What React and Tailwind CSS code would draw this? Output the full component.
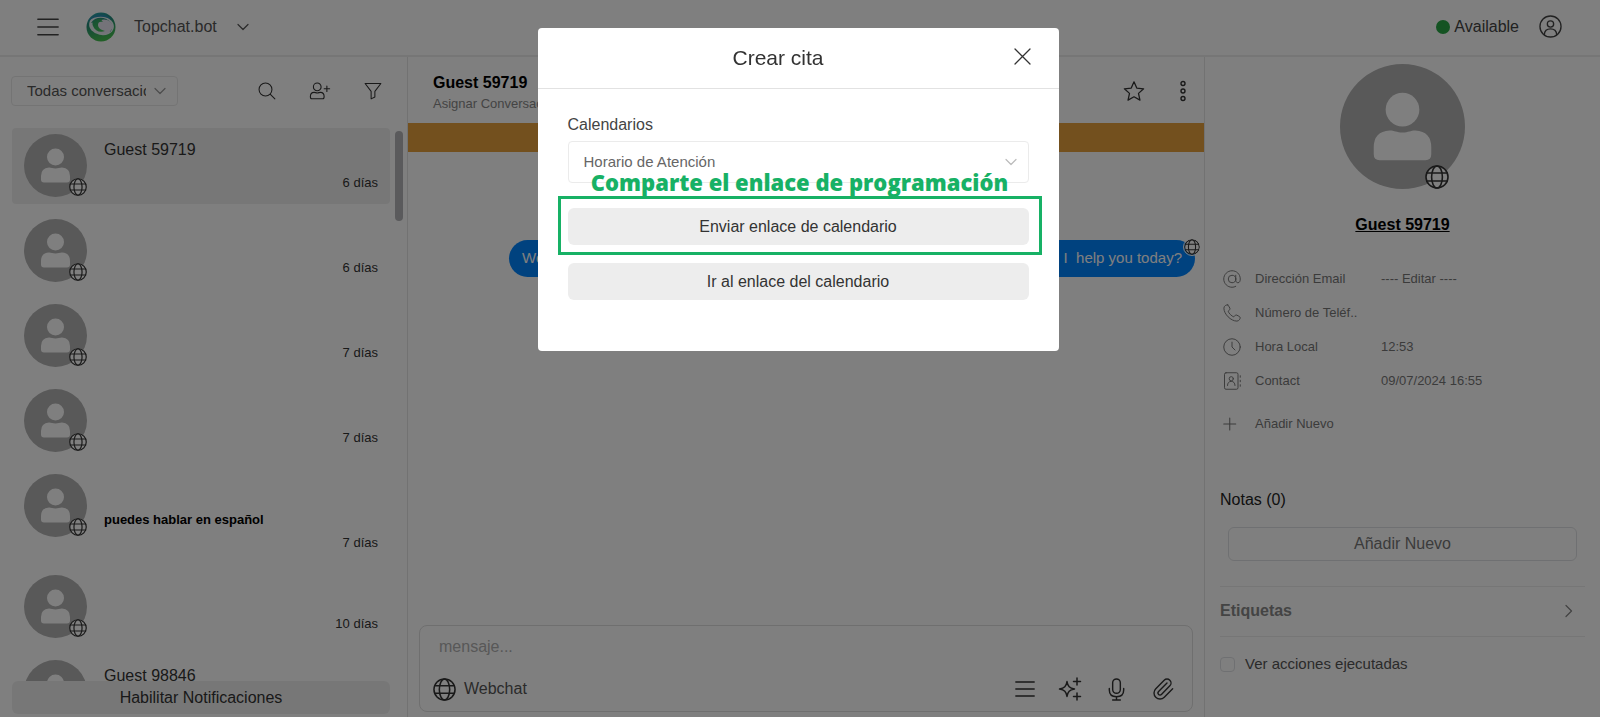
import React from 'react';

const conversations = [
  { id: 1, name: 'Guest 59719', message: '', time: '6 días', active: true },
  { id: 2, name: '', message: '', time: '6 días' },
  { id: 3, name: '', message: '', time: '7 días' },
  { id: 4, name: '', message: '', time: '7 días' },
  { id: 5, name: '', message: 'puedes hablar en español', time: '7 días' },
  { id: 6, name: '', message: '', time: '10 días' },
  { id: 7, name: 'Guest 98846', message: '', time: '' },
];

// Shared wrapper for the thin line icons
const Icon = ({ className, viewBox = '0 0 24 24', width = 1.4, children }) => (
  <svg
    className={className}
    viewBox={viewBox}
    fill="none"
    stroke="currentColor"
    strokeWidth={width}
    strokeLinecap="round"
    strokeLinejoin="round"
    aria-hidden="true"
  >
    {children}
  </svg>
);

const ChevronDown = ({ className }) => (
  <Icon className={className} viewBox="0 0 12 12" width={1.2}>
    <path d="M1 3.5 6 8.5l5-5" />
  </Icon>
);

const Globe = ({ className }) => (
  <Icon className={className} width={1.6}>
    <circle cx="12" cy="12" r="11" fill="#fff" />
    <ellipse cx="12" cy="12" rx="5.4" ry="11" />
    <path d="M1.8 8h20.4M1.8 16h20.4" />
  </Icon>
);

const Menu = ({ className }) => (
  <Icon className={className} width={1.8}>
    <path d="M1 3.5h22M1 12h22M1 20.5h22" />
  </Icon>
);

const Avatar = ({ className }) => (
  <svg className={className} viewBox="0 0 126 126" aria-hidden="true">
    <circle cx="63" cy="63" r="63" fill="#b2b2b2" />
    <circle cx="63" cy="46" r="17" fill="#fff" />
    <path
      d="M40 97q-6 0-6-6v-7q0-16 16-17c5 0 7 2 13 2s8-2 13-2q16 1 16 17v7q0 6-6 6z"
      fill="#fff"
    />
  </svg>
);

const Logo = ({ className }) => (
  <svg className={className} viewBox="0 0 30 30" aria-hidden="true">
    <defs>
      <linearGradient id="ring" x1="0" y1="0" x2="0.3" y2="1">
        <stop offset="0" stopColor="#2aa7b5" />
        <stop offset="0.4" stopColor="#238a78" />
        <stop offset="1" stopColor="#45bf50" />
      </linearGradient>
      <linearGradient id="swirl" x1="0" y1="0" x2="0.6" y2="1">
        <stop offset="0" stopColor="#2c9c6a" />
        <stop offset="1" stopColor="#45c25a" />
      </linearGradient>
    </defs>
    <circle cx="15" cy="15" r="14.5" fill="url(#ring)" />
    <ellipse cx="15.500" cy="13.500" rx="12.500" ry="9.500" fill="#e6eef0" transform="rotate(12 15.500 13.500)" />
    <path d="M5 11C9 4 20 4 25 11c2 4 1 7-1 9C22 11 14 8 5 11z" fill="#2a8f7c" />
    <ellipse cx="18" cy="14.500" rx="8.500" ry="7" fill="#e9e6f2" />
    <path d="M16 7C9 6 5 10 7 14c2 5 7 7 12 5-4-1-7-3-7-6 0-3 2-4 5-3-1-1-2-2-1-3z" fill="url(#swirl)" />
    <path d="M2 9C7 1 20 0 26 8 18 3 9 4 2 9z" fill="#2b8fae" />
  </svg>
);

const TopBar = () => (
  <header className="flex h-[57px] shrink-0 items-center justify-between border-b-2 border-[#ececec] pb-[2px] pl-[37px] pr-[38px]">
    <div className="flex items-center">
      <button type="button" aria-label="Menú" className="text-[#444]">
        <Menu className="h-[22px] w-[22px]" />
      </button>
      <Logo className="ml-[27px] h-[30px] w-[30px]" />
      <button type="button" className="ml-[18px] flex items-center text-base text-[#555]">
        Topchat.bot
        <ChevronDown className="ml-5 h-3 w-3" />
      </button>
    </div>
    <div className="flex items-center">
      <span className="h-3.5 w-3.5 rounded-full bg-[#28a745]" />
      <span className="ml-1 text-base text-[#444]">Available</span>
      <button type="button" aria-label="Perfil" className="ml-5 text-[#444]">
        <Icon className="h-[23px] w-[23px]">
          <circle cx="12" cy="12" r="11" />
          <circle cx="12" cy="9.4" r="3.3" />
          <path d="M5.5 20.5c.3-4 2.7-6 6.5-6s6.2 2 6.5 6" />
        </Icon>
      </button>
    </div>
  </header>
);

const ConversationItem = ({ name, message, time, active }) => (
  <li className={`flex min-h-[76px] shrink-0 px-3 pb-[7px] ${active ? 'rounded bg-[#efefef]' : ''}`}>
    <div className="relative mt-[6px] h-[63px] w-[63px] shrink-0">
      <Avatar className="h-[63px] w-[63px]" />
      <Globe className="absolute bottom-px right-0 h-[18px] w-[18px] text-[#333]" />
    </div>
    <div className="ml-[17px] flex-1 pt-[10px]">
      <p className="h-6 text-base leading-6 text-[#333]">{name}</p>
      {message && <p className="mt-[9px] text-[13px] font-bold leading-[18px] text-black">{message}</p>}
      {time && (
        <p className={`text-right text-[13px] leading-5 text-[#333] ${message ? 'mt-1' : 'mt-[11px]'}`}>{time}</p>
      )}
    </div>
  </li>
);

const ConversationList = () => (
  <aside className="flex w-[408px] shrink-0 flex-col border-r border-[#e4e4e4]">
    <div className="flex items-center pl-[11px] pr-3 pt-[19px]">
      <div className="relative">
        <select
          aria-label="Filtro de conversaciones"
          className="h-[30px] w-[167px] appearance-none rounded border border-[#e9e9e9] bg-white pl-[15px] pr-[31px] text-[15px] text-[#555]"
        >
          <option>Todas conversaciones</option>
        </select>
        <ChevronDown className="pointer-events-none absolute right-3 top-[9px] h-3 w-3 text-[#999]" />
      </div>
      <div className="flex flex-1 items-center justify-end gap-[33px] pr-[13px] text-[#333]">
        <button type="button" aria-label="Buscar">
          <Icon className="h-[18px] w-[18px]">
            <circle cx="10" cy="10" r="8.6" />
            <path d="m16.5 16.5 6 6" />
          </Icon>
        </button>
        <button type="button" aria-label="Asignar contacto">
          <Icon className="h-[22px] w-[22px]" width={1.2}>
            <circle cx="9" cy="7.5" r="4.2" />
            <path d="M1.5 18c0-3 1.5-4.5 4-4.5 1.5 0 2 .6 3.5.6s2-.6 3.5-.6c2.5 0 4 1.5 4 4.5 0 2-.5 2.5-1.5 2.5H3c-1 0-1.5-.5-1.5-2.5z" />
            <path d="M16.5 9.5h6M19.5 6.5v6" />
          </Icon>
        </button>
        <button type="button" aria-label="Filtrar">
          <Icon className="h-[18px] w-[18px]">
            <path d="M1.5 2h21l-8 10.5V20l-5 2.5v-10z" />
          </Icon>
        </button>
      </div>
    </div>
    <div className="mt-[22px] flex min-h-0 flex-1">
      <ul className="ml-3 flex w-[378px] flex-col gap-[9px] overflow-hidden">
        {conversations.map((item) => (
          <ConversationItem key={item.id} {...item} />
        ))}
      </ul>
      <div className="ml-[5px] mt-[3px] h-[90px] w-2 rounded-full bg-[#b5b5b8]" />
    </div>
    <button
      type="button"
      className="mb-[3px] ml-3 mr-[17px] h-[33px] shrink-0 rounded-md bg-[#efefef] text-base text-[#333]"
    >
      Habilitar Notificaciones
    </button>
  </aside>
);

const Composer = () => (
  <div className="mx-[11px] mb-[5px] flex h-[87px] flex-col rounded-lg border border-[#dedede] px-[13px] pb-[10px] pt-[9px]">
    <input
      type="text"
      aria-label="Mensaje"
      placeholder="mensaje..."
      className="h-6 px-[6px] text-base outline-none placeholder:text-[#b0b0b0]"
    />
    <div className="mt-auto flex items-center justify-between">
      <button type="button" className="flex items-center gap-2 text-base text-[#555]">
        <Globe className="h-[23px] w-[23px] text-[#333]" />
        Webchat
      </button>
      <div className="flex items-center gap-[23px] pr-1 text-[#333]">
        <button type="button" aria-label="Plantillas">
          <Menu className="h-5 w-5" />
        </button>
        <button type="button" aria-label="Inteligencia artificial">
          <Icon className="h-6 w-6" width={1.5}>
            <path d="M9 4.5c.8 5 2.5 6.7 7.5 7.5-5 .8-6.7 2.5-7.5 7.5-.8-5-2.5-6.7-7.5-7.5 5-.8 6.7-2.5 7.5-7.5z" />
            <path d="M15.5 4.5h7M19 1v7M15.5 19.5h7M19 16v7" />
          </Icon>
        </button>
        <button type="button" aria-label="Grabar audio">
          <Icon className="h-[23px] w-[23px]" width={1.5}>
            <rect x="8" y="1" width="8" height="15" rx="4" />
            <path d="M4.5 11v1.5c0 4.5 3 7 7.5 7s7.5-2.5 7.5-7V11M12 19.5V23M8 23h8" />
          </Icon>
        </button>
        <button type="button" aria-label="Adjuntar archivo">
          <Icon className="h-6 w-6" width={1.4}>
            <path d="m16 6-8.414 8.586a2 2 0 0 0 2.829 2.829l8.414-8.586a4 4 0 1 0-5.657-5.657l-8.379 8.551a6 6 0 1 0 8.485 8.485l8.379-8.551" />
          </Icon>
        </button>
      </div>
    </div>
  </div>
);

const ChatPanel = () => (
  <main className="flex min-w-0 flex-1 flex-col">
    <div className="flex h-[66px] shrink-0 items-center justify-between pl-[25px] pr-[13px] pt-[2px]">
      <div className="pt-[6px]">
        <h2 className="text-base font-bold leading-5 text-black">Guest 59719</h2>
        <p className="text-[13px] leading-[22px] text-[#888]">Asignar Conversación</p>
      </div>
      <div className="flex items-center gap-[30px] text-[#333]">
        <button type="button" aria-label="Destacar">
          <Icon className="h-[22px] w-[22px]">
            <path d="m12 2 3 6.8 7.5.8-5.600 5 1.600 7.4-6.500-3.700L5.500 22l1.600-7.400-5.600-5L9 8.800z" />
          </Icon>
        </button>
        <button type="button" aria-label="Más opciones">
          <Icon className="h-[22px] w-4" viewBox="0 0 16 22">
            <circle cx="8" cy="3.5" r="2" />
            <circle cx="8" cy="11" r="2" />
            <circle cx="8" cy="18.5" r="2" />
          </Icon>
        </button>
      </div>
    </div>
    <div className="h-[29px] shrink-0 bg-[#e6a03c]" />
    <div className="flex-1 pl-[101px] pr-[9px] pt-[88px]">
      <div className="relative flex h-[37px] items-center justify-between rounded-full bg-[#0084ff] px-[13px] text-[15px] text-white">
        <span>Welcome to Topchat.bot!</span>
        <span className="whitespace-pre">How can I  help you today?</span>
        <Globe className="absolute -right-[5px] -top-px h-4 w-4 rounded-full text-[#333] outline outline-1 outline-white" />
      </div>
    </div>
    <Composer />
  </main>
);

const DetailRow = ({ icon, label, value }) => (
  <div className="flex h-[34px] items-center text-[13px] text-[#777]">
    <Icon className="h-[18px] w-[18px] shrink-0" width={1.3}>
      {icon}
    </Icon>
    <dt className="ml-[14px] w-[126px] shrink-0">{label}</dt>
    <dd>{value}</dd>
  </div>
);

const DetailsPanel = () => (
  <aside className="flex w-[396px] shrink-0 flex-col border-l border-[#e4e4e4] px-[15px] pt-[7px]">
    <div className="relative self-center">
      <Avatar className="h-[125px] w-[125px]" />
      <Globe className="absolute bottom-0 right-4 h-6 w-6 text-[#333]" />
    </div>
    <a href="#perfil" className="mt-6 self-center text-base font-bold leading-6 text-black underline">
      Guest 59719
    </a>
    <dl className="mt-[25px] pl-[3px]">
      <DetailRow
        label="Dirección Email"
        value="---- Editar ----"
        icon={
          <>
            <circle cx="12" cy="12" r="5" />
            <path d="M17 7v6.5c0 2.5 1.5 3.5 3 3.5 2.2 0 3-2.5 3-5C23 5.5 18 1 12 1S1 6 1 12s5 11 11 11c2 0 3.5-.4 5-1.2" />
          </>
        }
      />
      <DetailRow
        label="Número de Teléf.."
        value=""
        icon={
          <path d="M6.5 1.200c-2-.7-5.300 1.500-5.300 4.300 0 8 9.300 17.300 17.300 17.300 2.800 0 5-3.300 4.300-5.300-.2-.6-4.800-3-5.500-3-1 0-2 2.500-3 2.500-2 0-7.300-5.300-7.300-7.300 0-1 2.500-2 2.500-3 0-.7-2.400-5.300-3-5.500z" />
        }
      />
      <DetailRow
        label="Hora Local"
        value="12:53"
        icon={
          <>
            <circle cx="12" cy="12" r="11" />
            <path d="M12 5.5V12l4 4" />
          </>
        }
      />
      <DetailRow
        label="Contact"
        value="09/07/2024 16:55"
        icon={
          <>
            <rect x="2" y="1" width="18" height="22" rx="2" />
            <circle cx="11" cy="9" r="2.8" />
            <path d="M6 18c0-3.5 2-5.5 5-5.5s5 2 5 5.5M23 5v2M23 11v2M23 17v2" />
          </>
        }
      />
    </dl>
    <button type="button" className="ml-[3px] mt-[9px] flex h-[34px] items-center text-[13px] text-[#777]">
      <Icon className="h-[18px] w-[18px]">
        <path d="M1 12h16M9 4v16" />
      </Icon>
      <span className="ml-[14px]">Añadir Nuevo</span>
    </button>
    <h3 className="mt-[47px] text-base leading-6 text-[#222]">Notas (0)</h3>
    <button
      type="button"
      className="mx-2 mt-[15px] h-[34px] shrink-0 rounded-md border border-[#dfe1e4] text-base text-[#777]"
    >
      Añadir Nuevo
    </button>
    <button
      type="button"
      className="mt-[25px] flex h-[51px] shrink-0 items-center justify-between border-y border-[#ececec] pb-[2px] pr-[10px] text-base font-bold text-[#888]"
    >
      Etiquetas
      <Icon className="h-3.5 w-3.5" viewBox="0 0 14 14" width={1.3}>
        <path d="m5 1.5 5.5 5.5L5 12.5" />
      </Icon>
    </button>
    <label className="mt-[15px] flex items-center gap-[10px] text-[15px] leading-6 text-[#555]">
      <input type="checkbox" className="h-[15px] w-[15px] appearance-none rounded-sm border border-[#dfe1e4]" />
      Ver acciones ejecutadas
    </label>
  </aside>
);

const AppointmentModal = () => (
  <div className="fixed inset-0 flex items-start justify-center bg-black/50 pr-1 pt-7">
    <div role="dialog" aria-modal="true" aria-labelledby="modal-title" className="w-[521px] rounded bg-white pb-[51px]">
      <div className="relative flex h-[61px] items-center justify-center border-b border-[#e2e2e2] pr-10">
        <h1 id="modal-title" className="text-[21px] text-[#333]">Crear cita</h1>
        <button type="button" aria-label="Cerrar" className="absolute right-7 top-5 text-[#333]">
          <Icon className="h-[17px] w-[17px]" viewBox="0 0 17 17" width={1.3}>
            <path d="m1 1 15 15M16 1 1 16" />
          </Icon>
        </button>
      </div>
      <div className="px-[30px] pt-6">
        <label htmlFor="calendar" className="block text-base leading-6 text-[#444]">
          Calendarios
        </label>
        <div className="relative mt-1">
          <select
            id="calendar"
            className="h-[42px] w-full appearance-none rounded border border-[#ebebeb] bg-white pl-[15px] pr-10 text-[15px] text-[#666]"
          >
            <option>Horario de Atención</option>
          </select>
          <ChevronDown className="pointer-events-none absolute right-3 top-[15px] h-3 w-3 text-[#bbb]" />
        </div>
        {/* Highlighted action with its callout */}
        <div className="relative mt-[25px]">
          <p className="pointer-events-none absolute inset-x-0 -top-[42px] whitespace-nowrap pl-[3px] text-center font-['Open_Sans',sans-serif] text-[22px] font-extrabold leading-8 text-[#17b165]">
            Comparte el enlace de programación
          </p>
          <div className="pointer-events-none absolute -bottom-[10px] -left-[10px] -right-[13px] -top-3 border-3 border-[#17b165]" />
          <button type="button" className="h-[37px] w-full rounded-md bg-[#ededed] text-base text-[#333]">
            Enviar enlace de calendario
          </button>
        </div>
        <button type="button" className="mt-[18px] h-[37px] w-full rounded-md bg-[#ededed] text-base text-[#333]">
          Ir al enlace del calendario
        </button>
      </div>
    </div>
  </div>
);

const App = () => {
  return (
    <div className="flex h-screen flex-col overflow-hidden bg-white font-['Liberation_Sans',Arial,sans-serif]">
      <TopBar />
      <div className="flex min-h-0 flex-1">
        <ConversationList />
        <ChatPanel />
        <DetailsPanel />
      </div>
      <AppointmentModal />
    </div>
  );
};

export default App;
